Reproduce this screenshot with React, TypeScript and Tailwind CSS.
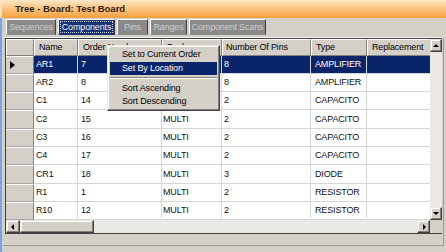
import React from "react";

type Row = {
  name: string;
  order: string;
  pkg: string;
  pins: string;
  type: string;
  h: string;
};

const rows: Row[] = [
  { name: "AR1", order: "7", pkg: "MULTI", pins: "8", type: "AMPLIFIER", h: "h-[18px]" },
  { name: "AR2", order: "8", pkg: "MULTI", pins: "8", type: "AMPLIFIER", h: "h-[18px]" },
  { name: "C1", order: "14", pkg: "MULTI", pins: "2", type: "CAPACITO", h: "h-[18px]" },
  { name: "C2", order: "15", pkg: "MULTI", pins: "2", type: "CAPACITO", h: "h-[19px]" },
  { name: "C3", order: "16", pkg: "MULTI", pins: "2", type: "CAPACITO", h: "h-[18px]" },
  { name: "C4", order: "17", pkg: "MULTI", pins: "2", type: "CAPACITO", h: "h-[18px]" },
  { name: "CR1", order: "18", pkg: "MULTI", pins: "3", type: "DIODE", h: "h-[19px]" },
  { name: "R1", order: "1", pkg: "MULTI", pins: "2", type: "RESISTOR", h: "h-[18px]" },
  { name: "R10", order: "12", pkg: "MULTI", pins: "2", type: "RESISTOR", h: "h-[18px]" },
];

const tabs = [
  { label: "Sequences", w: "w-[50px]" },
  { label: "Components", w: "w-[57px]", active: true },
  { label: "Pins", w: "w-[31px]" },
  { label: "Ranges", w: "w-[37px]" },
  { label: "Component Scans", w: "w-[77px]" },
];

const Arrow = ({ dir }: { dir: "up" | "down" | "left" | "right" }) => {
  const pts = {
    up: "1,5 4,2 7,5",
    down: "1,2 4,5 7,2",
    left: "5,1 2,4 5,7",
    right: "3,1 6,4 3,7",
  }[dir];
  return (
    <svg width="8" height="8" viewBox="0 0 8 8">
      <polygon points={pts} fill="#000" />
    </svg>
  );
};

const ScrollButton = ({ dir, className }: { dir: "up" | "down" | "left" | "right"; className: string }) => (
  <div
    className={`${className} flex items-center justify-center bg-[#d4d0c8] border border-t-[#e8e6e0] border-l-[#e8e6e0] border-r-[#404040] border-b-[#404040] shadow-[inset_-1px_-1px_#808080,inset_1px_1px_#ffffff]`}
  >
    <Arrow dir={dir} />
  </div>
);

const headCell = "flex items-center border-t border-t-white border-l border-l-white border-r border-r-[#808080] border-b border-b-[#808080] whitespace-nowrap overflow-hidden";

export default function App() {
  return (
    <div className="w-[446px] h-[252px] overflow-hidden bg-[#d4d0c8] relative flex flex-col text-[9px] tracking-[-0.15px] leading-none text-black font-['Liberation_Sans',Arial,sans-serif]">
      {/* title */}
      <div className="h-[18px] flex items-center pl-[13px] bg-gradient-to-b from-[#fde7c6] via-[#fbc27a] to-[#f7a03a] border-l-2 border-l-[#fbe3bf]">
        <span className="font-bold text-[9.5px] tracking-normal text-[#2a2418]">Tree - Board: Test Board</span>
      </div>

      <div className="flex-1 flex flex-col border-l-2 border-l-[#7ea3dc]">
        {/* tabs */}
        <div className="h-[18px] flex items-end gap-[2px] pl-[4px] pb-[1px]">
          {tabs.map((t) =>
            t.active ? (
              <div
                key={t.label}
                className={`${t.w} h-[16px] bg-[#18336e] border border-t-white border-l-white border-r-[#404040] border-b-[#18336e] p-[1px]`}
              >
                <div className="w-full h-full border border-dotted border-[#c8d0e8] flex items-center justify-center whitespace-nowrap text-[#f0f2ff]">
                  {t.label}
                </div>
              </div>
            ) : (
              <div
                key={t.label}
                className={`${t.w} h-[16px] bg-[#8a8a8a] border border-t-white border-l-white border-r-[#404040] border-b-[#8a8a8a] flex items-center justify-center whitespace-nowrap text-[#cfcfcf]`}
              >
                {t.label}
              </div>
            )
          )}
        </div>

        {/* grid frame */}
        <div className="ml-[1px] mt-[1px] w-[441px] h-[209px] border-r border-b border-r-[#9a9a9a] border-b-[#9a9a9a] border-t border-t-[#f4f4f4]">
          <div className="ml-[2px] w-[437px] h-[196px] border border-[#404040] flex">
            <div className="w-[424px] flex flex-col">
              {/* header */}
              <div className="h-[17px] flex bg-[#d4d0c8]">
                <div className={`w-[28px] ${headCell}`} />
                <div className={`w-[44px] pl-[4px] ${headCell}`}>
                  <span>Name</span>
                  <span className="ml-[9px] text-[8px] text-[#9a9a9a]">↓</span>
                </div>
                <div className={`w-[84px] pl-[4px] ${headCell}`}>Order Number</div>
                <div className={`w-[60px] pl-[4px] ${headCell}`}>Package</div>
                <div className={`w-[89px] pl-[3px] ${headCell}`}>Number Of Pins</div>
                <div className={`w-[56px] pl-[4px] ${headCell}`}>Type</div>
                <div className={`w-[63px] pl-[4px] ${headCell} border-r-0`}>Replacement</div>
              </div>

              {/* rows */}
              <div className="flex-1 bg-white flex flex-col">
                {rows.map((r, i) => {
                  const sel = i === 0;
                  const cell = `flex items-center border-r border-b border-[#d6d6d6] ${sel ? "bg-[#0a246a] text-white" : "text-[#111]"}`;
                  return (
                    <div key={r.name} className={`${r.h} flex`}>
                      <div className="w-[28px] bg-[#d4d0c8] border-t border-t-white border-r border-r-[#808080] border-b border-b-[#a8a8a8] flex items-center pl-[4px]">
                        {sel && (
                          <svg width="6" height="8" viewBox="0 0 6 8">
                            <polygon points="0,0 5,4 0,8" fill="#000" />
                          </svg>
                        )}
                      </div>
                      <div className={`w-[44px] pl-[2px] ${cell}`}>{r.name}</div>
                      <div className={`w-[84px] pl-[3px] ${cell}`}>{r.order}</div>
                      <div className={`w-[60px] pl-[1px] ${cell}`}>{r.pkg}</div>
                      <div className={`w-[89px] pl-[2px] ${cell}`}>{r.pins}</div>
                      <div className={`w-[56px] pl-[4px] ${cell}`}>{r.type}</div>
                      <div className={`w-[63px] ${cell} border-r-0`} />
                    </div>
                  );
                })}
              </div>

              {/* horizontal scrollbar */}
              <div className="h-[13px] flex bg-[#ebe9e5]">
                <ScrollButton dir="left" className="w-[14px] h-[13px]" />
                <div className="w-[74px] h-[13px] bg-[#d4d0c8] border border-t-[#e8e6e0] border-l-[#e8e6e0] border-r-[#404040] border-b-[#404040] shadow-[inset_-1px_-1px_#808080,inset_1px_1px_#ffffff]" />
                <div className="flex-1" />
                <ScrollButton dir="right" className="w-[13px] h-[13px]" />
              </div>
            </div>

            {/* vertical scrollbar */}
            <div className="w-[12px] flex flex-col bg-[#ebe9e5]">
              <ScrollButton dir="up" className="w-[12px] h-[13px]" />
              <div className="flex-1" />
              <ScrollButton dir="down" className="w-[12px] h-[13px]" />
              <div className="h-[13px] bg-[#d4d0c8]" />
            </div>
          </div>
        </div>
      </div>

      {/* context menu */}
      <div className="absolute left-[107px] top-[45px] w-[113px] h-[66px] bg-[#d4d0c8] border border-t-[#e8e6e0] border-l-[#e8e6e0] border-r-[#404040] border-b-[#404040] shadow-[inset_-1px_-1px_#808080,inset_1px_1px_#ffffff] p-[2px] flex flex-col">
        <div className="h-[14px] flex items-center pl-[12px] whitespace-nowrap">Set to Current Order</div>
        <div className="h-[13px] flex items-center pl-[12px] whitespace-nowrap bg-[#0a246a] text-white">Set By Location</div>
        <div className="h-[8px] flex flex-col justify-center">
          <div className="h-[1px] bg-[#808080]" />
          <div className="h-[1px] bg-white" />
        </div>
        <div className="h-[13px] flex items-center pl-[12px] whitespace-nowrap">Sort Ascending</div>
        <div className="h-[13px] flex items-center pl-[12px] whitespace-nowrap">Sort Descending</div>
      </div>
    </div>
  );
}
